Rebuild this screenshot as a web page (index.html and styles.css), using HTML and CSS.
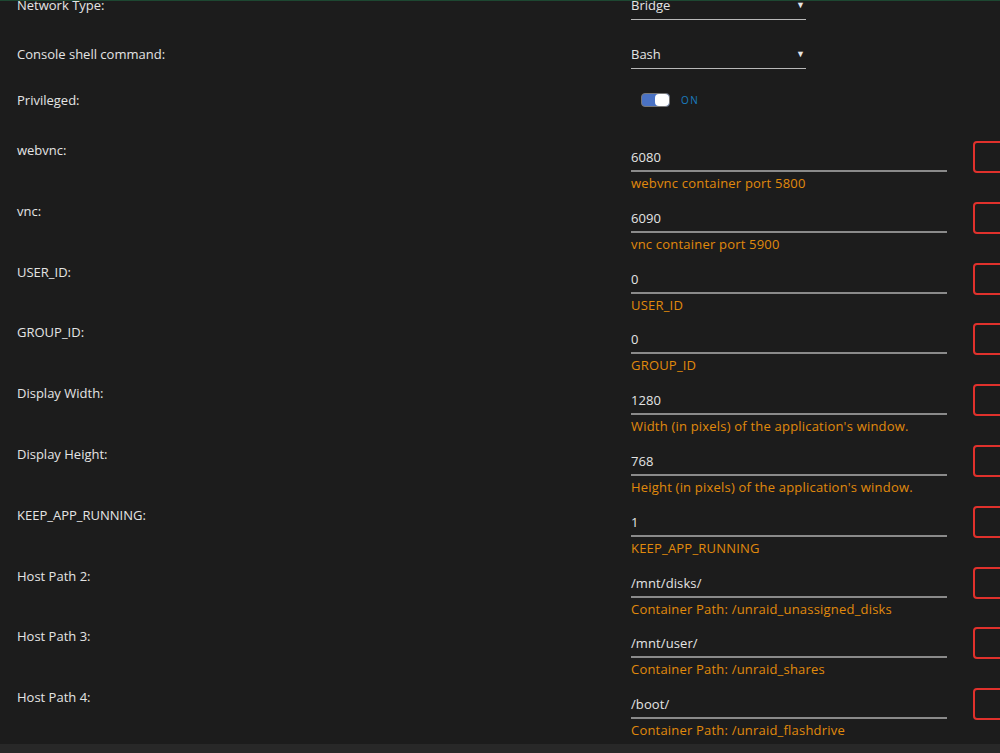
FILE: index.html
```html
<!DOCTYPE html>
<html lang="en">
<head>
  <meta charset="UTF-8" />
  <title>Update Container</title>
  <link rel="stylesheet" href="styles.css">
</head>
<body>
  <div class="form">
    <div class="row row-net">
      <div class="label">Network Type:</div>
      <div class="select">Bridge <span class="arrow">&#9660;</span></div>
    </div>
    <div class="row row-shell">
      <div class="label">Console shell command:</div>
      <div class="select">Bash <span class="arrow">&#9660;</span></div>
    </div>
    <div class="row row-priv">
      <div class="label">Privileged:</div>
      <div class="switch">
        <span class="track"><span class="knob"></span></span>
        <span class="switch-text">ON</span>
      </div>
    </div>

    <div class="row field">
      <div class="label">webvnc:</div>
      <div class="input-col">
        <div class="input">6080</div>
        <div class="help">webvnc container port 5800</div>
      </div>
      <div class="edit"></div>
    </div>
    <div class="row field">
      <div class="label">vnc:</div>
      <div class="input-col">
        <div class="input">6090</div>
        <div class="help">vnc container port 5900</div>
      </div>
      <div class="edit"></div>
    </div>
    <div class="row field">
      <div class="label">USER_ID:</div>
      <div class="input-col">
        <div class="input">0</div>
        <div class="help">USER_ID</div>
      </div>
      <div class="edit"></div>
    </div>
    <div class="row field">
      <div class="label">GROUP_ID:</div>
      <div class="input-col">
        <div class="input">0</div>
        <div class="help">GROUP_ID</div>
      </div>
      <div class="edit"></div>
    </div>
    <div class="row field">
      <div class="label">Display Width:</div>
      <div class="input-col">
        <div class="input">1280</div>
        <div class="help">Width (in pixels) of the application's window.</div>
      </div>
      <div class="edit"></div>
    </div>
    <div class="row field">
      <div class="label">Display Height:</div>
      <div class="input-col">
        <div class="input">768</div>
        <div class="help">Height (in pixels) of the application's window.</div>
      </div>
      <div class="edit"></div>
    </div>
    <div class="row field">
      <div class="label">KEEP_APP_RUNNING:</div>
      <div class="input-col">
        <div class="input">1</div>
        <div class="help">KEEP_APP_RUNNING</div>
      </div>
      <div class="edit"></div>
    </div>
    <div class="row field">
      <div class="label">Host Path 2:</div>
      <div class="input-col">
        <div class="input">/mnt/disks/</div>
        <div class="help">Container Path: /unraid_unassigned_disks</div>
      </div>
      <div class="edit"></div>
    </div>
    <div class="row field">
      <div class="label">Host Path 3:</div>
      <div class="input-col">
        <div class="input">/mnt/user/</div>
        <div class="help">Container Path: /unraid_shares</div>
      </div>
      <div class="edit"></div>
    </div>
    <div class="row field">
      <div class="label">Host Path 4:</div>
      <div class="input-col">
        <div class="input">/boot/</div>
        <div class="help">Container Path: /unraid_flashdrive</div>
      </div>
      <div class="edit"></div>
    </div>
  </div>
  <div class="footer"></div>
</body>
</html>
```

FILE: styles.css
```css
html, body {
  margin: 0;
  height: 100%;
}

body {
  font-family: 'Open Sans', sans-serif;
  font-size: 13px;
  background: #1c1c1c;
  color: #e4e4e4;
  border-top: 1px solid #1d4731;
  box-sizing: border-box;
  overflow: hidden;
  position: relative;
}

.form {
  margin-top: -5px;
}

.row {
  display: flex;
  align-items: flex-start;
}

.label {
  width: 614px;
  padding-left: 17px;
  line-height: 18px;
  flex-shrink: 0;
}

.row-net {
  height: 49px;
}

.row-shell {
  height: 46px;
}

.row-priv {
  height: 50px;
}

.field {
  height: 60.8px;
}

.select {
  width: 175px;
  line-height: 18px;
  padding-bottom: 5px;
  border-bottom: 1px solid #b8b8b8;
  position: relative;
}

.arrow {
  position: absolute;
  right: 1px;
  top: 0;
  font-size: 9px;
}

.switch {
  display: flex;
  align-items: center;
  gap: 11px;
  padding-left: 10px;
  margin-top: 2px;
}

.track {
  display: flex;
  justify-content: flex-end;
  width: 27px;
  height: 12px;
  border: 1px solid #777;
  border-radius: 4px;
  background: #4a72c4;
}

.knob {
  width: 14px;
  height: 12px;
  border-radius: 4px;
  background: #fff;
}

.switch-text {
  font-size: 10px;
  letter-spacing: 1.5px;
  color: #1a7dc0;
}

.input-col {
  width: 316px;
  flex-shrink: 0;
}

.input {
  line-height: 18px;
  padding: 7px 0 4px;
  border-bottom: 2px solid #8a8a8a;
  letter-spacing: 0.1px;
}

.help {
  margin-top: 3px;
  line-height: 16px;
  color: #e08a0c;
  letter-spacing: 0.2px;
}

.edit {
  margin-left: 26px;
  width: 40px;
  height: 28px;
  border: 2px solid #e0312c;
  border-radius: 4px;
  flex-shrink: 0;
}

.footer {
  position: absolute;
  left: 0;
  right: 0;
  bottom: 0;
  height: 9px;
  background: #282828;
}
```
